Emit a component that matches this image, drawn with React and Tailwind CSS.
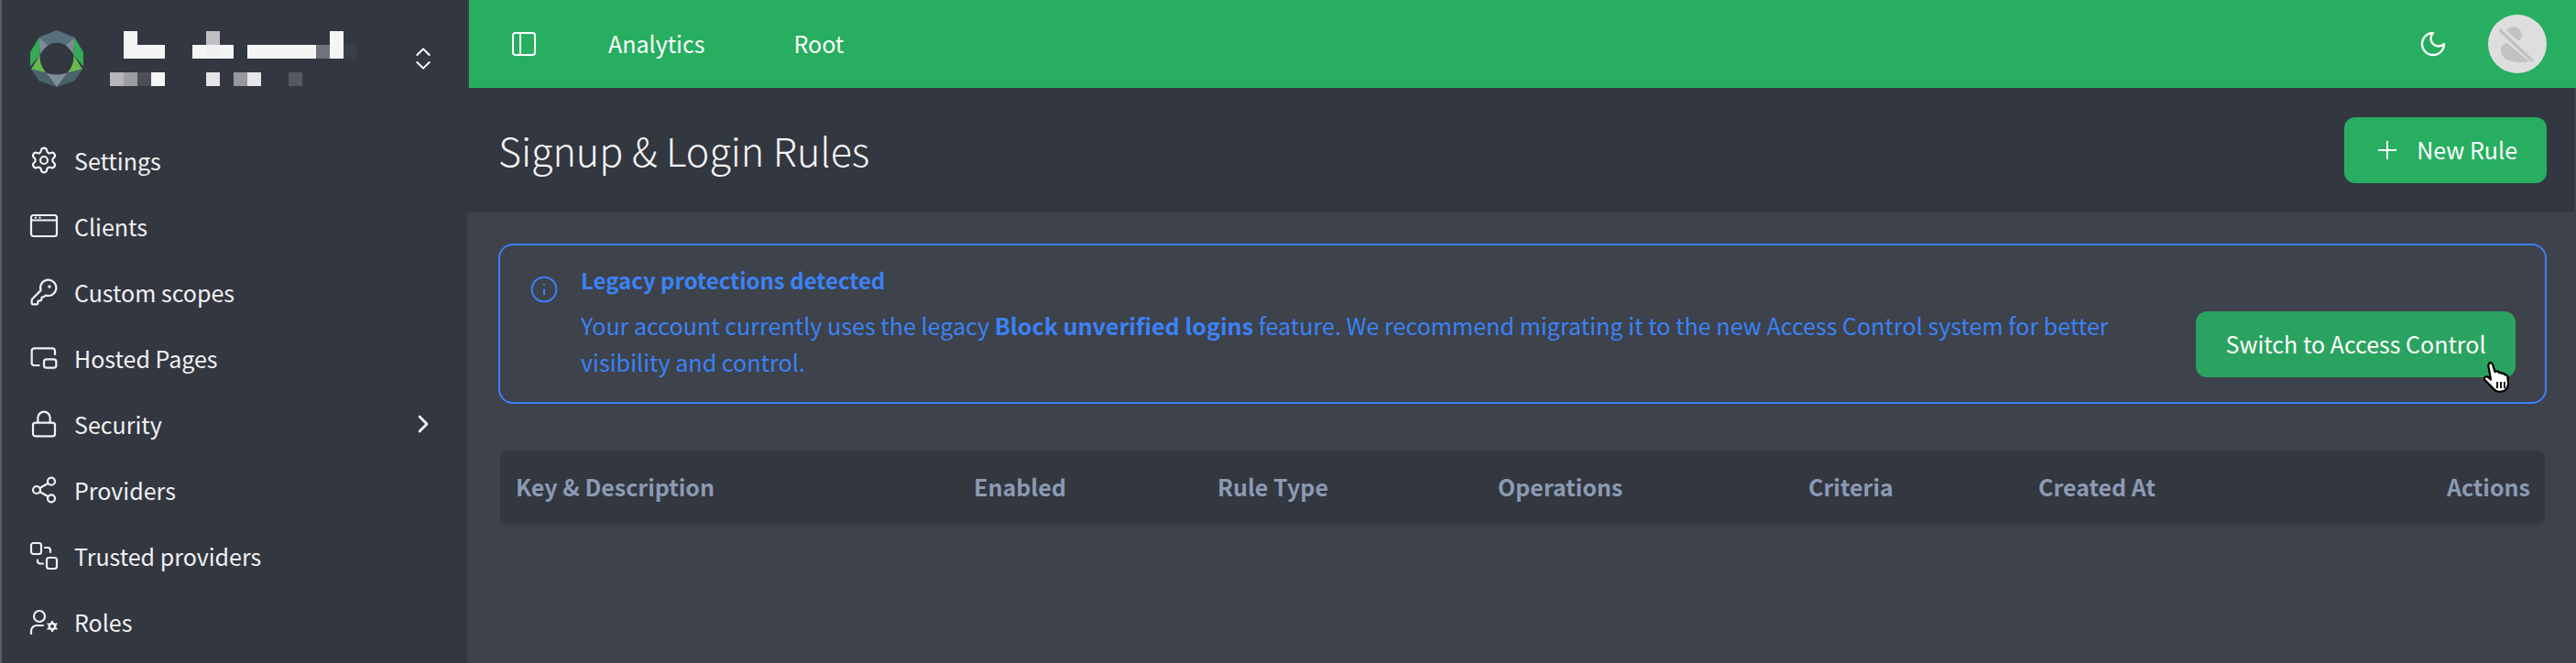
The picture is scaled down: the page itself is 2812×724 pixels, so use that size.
import {
  ChevronRight,
  ChevronsUpDown,
  Info,
  KeyRound,
  Lock,
  PanelLeft,
  PictureInPicture2,
  Plus,
  Settings,
  Share2,
} from "lucide-react";

// Blurred org name in the sidebar: 15px mosaic cells, 18 columns by 4 rows
const W = "bg-[#f5f5f6]";
const mosaic = [
  ["", W, "", "", "", "", "", "bg-[#c0c0c3]", "", "", "", "", "", "", "", "", W, ""],
  ["", W, W, W, "", "", W, "bg-[#eff0f2]", W, "", W, W, W, W, W, "bg-[#70737b]", W, "bg-[#3a3e47]"],
  ["", "", "", "", "", "", "", "", "", "", "", "", "", "", "", "", "", ""],
  ["bg-[#b6b6ba]", "bg-[#9d9ea2]", "bg-[#4c4f57]", W, "", "", "", "bg-[#e4e4e5]", "", "bg-[#96979c]", "bg-[#e6e6e8]", "", "", "bg-[#555861]", "", "", "", ""],
];

function Logo() {
  return (
    <svg width="60" height="64" viewBox="0 0 62 66" preserveAspectRatio="none" className="shrink-0">
      <path d="M31 1 L11 9 L21 18 Q31 12 41 18 L51 9 Z" fill="#56717d" />
      <path d="M11 9 L21 18 Q14 24 12 29 Z" fill="#7d8b95" />
      <path d="M51 9 L41 18 Q48 24 50 29 Z" fill="#7d8b95" />
      <path d="M11 9 L1 26 L1 42 L12 29 Z" fill="#33aa55" />
      <path d="M51 9 L61 26 L61 42 L50 29 Z" fill="#33aa55" />
      <path d="M12 29 L2 45 L19 49 Q11 40 12 29 Z" fill="#66b84f" />
      <path d="M50 29 L60 45 L43 49 Q51 40 50 29 Z" fill="#66b84f" />
      <path d="M2 45 L11 58 L31 65 L19 49 Z" fill="#4a6369" />
      <path d="M60 45 L51 58 L31 65 L43 49 Z" fill="#4a6369" />
      <path d="M19 49 Q31 53 43 49 L31 65 Z" fill="#7f8e98" />
    </svg>
  );
}

function ClientsIcon() {
  return (
    <svg width="32" height="32" viewBox="0 0 32 32" fill="none" stroke="currentColor" strokeWidth="2.2" strokeLinecap="round" strokeLinejoin="round">
      <rect x="2" y="4" width="28" height="23" rx="2.5" />
      <path d="M2 9.5h28" />
      <path d="M7 6.700h.01M11.500 6.700h.01" />
    </svg>
  );
}

function TrustedIcon() {
  return (
    <svg width="32" height="32" viewBox="0 0 32 32" fill="none" stroke="currentColor" strokeWidth="2.2" strokeLinecap="round" strokeLinejoin="round">
      <rect x="2" y="2" width="11" height="12" rx="2.5" />
      <rect x="19" y="18" width="11" height="12" rx="2.5" />
      <path d="M17 7h3a3 3 0 0 1 3 3v2" />
      <path d="M15 24.500h-3a3 3 0 0 1-3-3v-1" />
    </svg>
  );
}

function RolesIcon() {
  return (
    <svg width="32" height="32" viewBox="0 0 32 32" fill="none" stroke="currentColor" strokeWidth="2.2" strokeLinecap="round" strokeLinejoin="round">
      <circle cx="11" cy="10" r="6" />
      <path d="M2 29v-3a6 6 0 0 1 6-6h7" />
      <circle cx="25" cy="21" r="3.200" strokeWidth="2.600" />
      <path d="M25 15.800v1M25 25.200v1M20.500 18.400l.9.500M28.600 23.100l.9.500M20.500 23.600l.9-.5M28.600 18.900l.9-.5" strokeWidth="2.200" />
    </svg>
  );
}

function MoonIcon() {
  return (
    <svg width="32" height="32" viewBox="0 0 24 24" fill="none" stroke="currentColor" strokeWidth="1.800" strokeLinecap="round" strokeLinejoin="round" className="ml-auto">
      <path d="M12 3a6 6 0 0 0 9 9 9 9 0 1 1-9-9Z" />
    </svg>
  );
}

const navItems = [
  { label: "Settings", icon: <Settings size={32} strokeWidth={1.65} /> },
  { label: "Clients", icon: <ClientsIcon /> },
  { label: "Custom scopes", icon: <KeyRound size={32} strokeWidth={1.65} /> },
  { label: "Hosted Pages", icon: <PictureInPicture2 size={32} strokeWidth={1.65} /> },
  { label: "Security", icon: <Lock size={32} strokeWidth={1.65} />, arrow: true },
  { label: "Providers", icon: <Share2 size={32} strokeWidth={1.65} /> },
  { label: "Trusted providers", icon: <TrustedIcon /> },
  { label: "Roles", icon: <RolesIcon /> },
];

const columns = [
  { label: "Key & Description", width: "w-[500px]" },
  { label: "Enabled", width: "w-[266px]" },
  { label: "Rule Type", width: "w-[306px]" },
  { label: "Operations", width: "w-[339px]" },
  { label: "Criteria", width: "w-[251px]" },
  { label: "Created At", width: "flex-1" },
  { label: "Actions", width: "" },
];

function Sidebar() {
  return (
    <aside className="w-[508px] ml-[2px] shrink-0 bg-[#333740] text-[#f1f1f3]">
      <div className="flex items-center h-[128px] pl-[30px] pr-[32px]">
        <Logo />
        <div className="ml-[28px] grid grid-cols-[repeat(18,15px)] auto-rows-[15px]">
          {mosaic.flat().map((cell, i) => (
            <div key={i} className={cell} />
          ))}
        </div>
        <ChevronsUpDown size={32} strokeWidth={1.5} className="ml-auto text-white" />
      </div>
      <nav className="flex flex-col mt-[11px]">
        {navItems.map((item) => (
          <div key={item.label} className="flex items-center h-[72px] pl-[30px] pr-[32px] gap-[17px] text-[25px] leading-[40px]">
            {item.icon}
            <span>{item.label}</span>
            {item.arrow && <ChevronRight size={32} strokeWidth={2} className="ml-auto text-white" />}
          </div>
        ))}
      </nav>
    </aside>
  );
}

function HandCursor() {
  return (
    <svg width="30" height="36" viewBox="0 0 30 36" className="absolute left-[2711px] top-[394px]">
      <path
        d="M6 3c1.500-1.500 3.500-.8 4 1l2.500 8 1.500-.5c1.500-.3 2.500.3 3 1.500 1.300-.6 2.700-.2 3.200 1 1.400-.5 2.800 0 3.300 1.300 1.300-.2 2.500.6 2.800 2l.7 7c.2 3-.8 5.500-3 7.500-2.500 2-7 2.500-10 1.200-2.500-1-4-3-5.500-5L1.500 21c-1-1.500-.5-3 .8-3.500 1.500-.5 3 .2 4.200 1.500l1.500 1.500L5.500 6.500C5.300 5 5.300 4 6 3z"
        fill="#fff"
        stroke="#000"
        strokeWidth="2.200"
        strokeLinejoin="round"
      />
      <path d="M15 23v7M19 23v7M23 23v7" stroke="#000" strokeWidth="1.800" />
    </svg>
  );
}

export default function App() {
  return (
    <div className="relative flex h-[724px] overflow-hidden bg-[#5a5e66] font-['Noto_Sans_CJK_SC','Noto_Sans',sans-serif]">
      <Sidebar />

      <main className="flex-1 flex flex-col bg-[#3e424b] min-w-0">
        <header className="ml-[2px] h-[96px] shrink-0 bg-[#27ae60] text-white flex items-center pl-[44px] pr-[32px] text-[25px]">
          <PanelLeft size={32} strokeWidth={1.5} />
          <span className="ml-[76px]">Analytics</span>
          <span className="ml-[97px]">Root</span>
          <MoonIcon />
          <div className="ml-[44px] w-[64px] h-[64px] rounded-full bg-[#dedede] flex items-center justify-center">
            <svg width="40" height="40" viewBox="0 0 40 40">
              <path d="M8 5L20 16h3a9 9 0 1 0-15-11Z" fill="#c2c2c2" />
              <path d="M9 19L33 39Q26 41 15 39Q2 36 2 27Q2 20 9 19Z" fill="#c2c2c2" />
              <path d="M0 4L37 39" stroke="#c2c2c2" strokeWidth="3.500" />
            </svg>
          </div>
        </header>

        <div className="mr-[2px] h-[136px] shrink-0 bg-[#333740] flex items-center justify-between pl-[34px] pr-[30px]">
          <h1 className="text-[43px] font-extralight leading-[64px] mb-[3px] text-[#f4f4f5]">Signup &amp; Login Rules</h1>
          <button className="flex items-center gap-[16px] h-[72px] pl-[31px] pr-[32px] rounded-[12px] bg-[#27ae60] text-white text-[25px]">
            <Plus size={32} strokeWidth={1.5} />
            New Rule
          </button>
        </div>

        <div className="pl-[34px] pr-[32px] pt-[34px]">
          <div className="flex items-start h-[175px] border-2 border-[#3b82f6] rounded-[16px] pl-[32px] pr-[32px] text-[#3b82f6] text-[25.1px]">
            <Info size={32} strokeWidth={1.5} className="mt-[32px] shrink-0" />
            <div className="ml-[24px] w-[1720px] pt-[18px]">
              <div className="font-bold text-[24px] leading-[40px]">Legacy protections detected</div>
              <p className="leading-[40px] mt-[9px]">
                Your account currently uses the legacy <strong className="font-bold">Block unverified logins</strong> feature. We recommend migrating it to the new Access Control system for better visibility and control.
              </p>
            </div>
            <button className="ml-auto mt-[72px] h-[72px] w-[349px] shrink-0 rounded-[12px] bg-[#2ba360] text-white text-[25px]">
              Switch to Access Control
            </button>
          </div>

          <div className="mt-[51px] ml-[2px] flex items-center h-[79px] w-[2232px] pl-[17px] pr-[16px] rounded-[8px] bg-[#333740] shadow-[0_4px_0_#393d46] text-[25px] font-bold text-[#8c9ab3]">
            {columns.map((col) => (
              <div key={col.label} className={col.width}>
                {col.label}
              </div>
            ))}
          </div>
        </div>
      </main>

      <HandCursor />
    </div>
  );
}
